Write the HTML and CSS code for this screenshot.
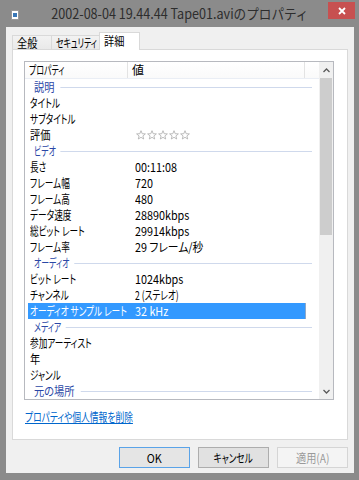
FILE: index.html
```html
<!DOCTYPE html>
<html lang="ja">
<head>
    <meta charset="UTF-8">
    <title>2002-08-04 19.44.44 Tape01.aviのプロパティ</title>
    <link rel="stylesheet" href="styles.css">
</head>
<body>
    <div class="window">
        <div class="titlebar">
            <svg class="app-icon" width="8" height="10" viewBox="0 0 8 10">
                <rect x="0.5" y="0.5" width="7" height="9" fill="#fff" stroke="#9a9a9a"/>
                <rect x="2" y="3" width="4" height="4" fill="#3a78b8"/>
            </svg>
            <div class="title">2002-08-04 19.44.44 Tape01.aviのプロパティ</div>
            <div class="close">
                <svg width="8" height="8" viewBox="0 0 8 8">
                    <path d="M1 1 L7 7 M7 1 L1 7" stroke="#fff" stroke-width="1.8"/>
                </svg>
            </div>
        </div>

        <div class="client">
            <div class="tabs">
                <div class="tab tab-general"><span class="t wide">全般</span></div>
                <div class="tab tab-security"><span class="t narrow">セキュリティ</span></div>
                <div class="tab tab-details active"><span class="t wide">詳細</span></div>
            </div>

            <div class="panel">
                <div class="listview">
                    <div class="list">
                        <div class="header">
                            <div class="col-name"><span class="t narrow">プロパティ</span></div>
                            <div class="col-value">値</div>
                            <div class="col-rest"></div>
                        </div>
                        <div class="rows">
                            <div class="group"><span class="t wide">説明</span></div>
                            <div class="row"><span class="t">タイトル</span><span></span></div>
                            <div class="row"><span class="t">サブタイトル</span><span></span></div>
                            <div class="row">
                                <span class="t wide">評価</span>
                                <span class="stars">
                                    <svg width="55" height="10" viewBox="0 0 55 10">
                                        <g fill="#fff" stroke="#b4b4b4" stroke-width="0.9" stroke-linejoin="round">
                                            <polygon points="5,0.7 6.2,3.7 9.4,3.9 6.9,5.9 7.7,9 5,7.3 2.3,9 3.1,5.9 0.6,3.9 3.8,3.7"/>
                                            <polygon transform="translate(11 0)" points="5,0.7 6.2,3.7 9.4,3.9 6.9,5.9 7.7,9 5,7.3 2.3,9 3.1,5.9 0.6,3.9 3.8,3.7"/>
                                            <polygon transform="translate(22 0)" points="5,0.7 6.2,3.7 9.4,3.9 6.9,5.9 7.7,9 5,7.3 2.3,9 3.1,5.9 0.6,3.9 3.8,3.7"/>
                                            <polygon transform="translate(33 0)" points="5,0.7 6.2,3.7 9.4,3.9 6.9,5.9 7.7,9 5,7.3 2.3,9 3.1,5.9 0.6,3.9 3.8,3.7"/>
                                            <polygon transform="translate(44 0)" points="5,0.7 6.2,3.7 9.4,3.9 6.9,5.9 7.7,9 5,7.3 2.3,9 3.1,5.9 0.6,3.9 3.8,3.7"/>
                                        </g>
                                    </svg>
                                </span>
                            </div>
                            <div class="group"><span class="t narrow">ビデオ</span></div>
                            <div class="row"><span class="t">長さ</span><span class="t num">00:11:08</span></div>
                            <div class="row"><span class="t">フレーム幅</span><span class="t num">720</span></div>
                            <div class="row"><span class="t">フレーム高</span><span class="t num">480</span></div>
                            <div class="row"><span class="t">データ速度</span><span class="t num">28890kbps</span></div>
                            <div class="row"><span class="t">総ビット レート</span><span class="t num">29914kbps</span></div>
                            <div class="row"><span class="t">フレーム率</span><span class="t num">29 フレーム/秒</span></div>
                            <div class="group"><span class="t narrow">オーディオ</span></div>
                            <div class="row"><span class="t">ビット レート</span><span class="t num">1024kbps</span></div>
                            <div class="row"><span class="t">チャンネル</span><span class="t">2 (ステレオ)</span></div>
                            <div class="row selected"><span class="t">オーディオ サンプル レート</span><span class="t num">32 kHz</span></div>
                            <div class="group"><span class="t narrow">メディア</span></div>
                            <div class="row"><span class="t">参加アーティスト</span><span></span></div>
                            <div class="row"><span class="t wide">年</span><span></span></div>
                            <div class="row"><span class="t">ジャンル</span><span></span></div>
                            <div class="group"><span class="t wide">元の場所</span></div>
                        </div>
                    </div>
                    <div class="scrollbar">
                        <div class="arrow">
                            <svg width="7" height="5" viewBox="0 0 7 5"><path d="M0.5 4 L3.5 1 L6.5 4" fill="none" stroke="#5a5a5a" stroke-width="1.3"/></svg>
                        </div>
                        <div class="track"><div class="thumb"></div></div>
                        <div class="arrow">
                            <svg width="7" height="5" viewBox="0 0 7 5"><path d="M0.5 1 L3.5 4 L6.5 1" fill="none" stroke="#5a5a5a" stroke-width="1.3"/></svg>
                        </div>
                    </div>
                </div>
                <div class="link-row"><a class="link t" href="#">プロパティや個人情報を削除</a></div>
            </div>

            <div class="buttons">
                <button class="btn default"><span class="t num">OK</span></button>
                <button class="btn"><span class="t">キャンセル</span></button>
                <button class="btn disabled"><span class="t wide">適用(A)</span></button>
            </div>
        </div>
    </div>
</body>
</html>
```

FILE: styles.css
```css
* {
    box-sizing: border-box;
}

body {
    margin: 0;
    font-family: "Noto Sans CJK JP", sans-serif;
    font-size: 12px;
    font-feature-settings: "palt" 1;
    color: #000;
}

/* Meiryo UI is much narrower than Noto, so squeeze the text a little */
.t {
    display: inline-block;
    white-space: nowrap;
    transform: scaleX(0.72);
    transform-origin: left center;
}

.t.narrow {
    transform: scaleX(0.66);
}

.t.wide {
    transform: scaleX(0.85);
}

.t.num {
    transform: scaleX(0.9);
}

.window {
    width: 359px;
    height: 480px;
    background: #8b8b8b;
    display: flex;
    flex-direction: column;
}

/* title bar */
.titlebar {
    height: 27px;
    display: grid;
    grid-template-columns: 1fr auto 1fr;
    align-items: start;
}

.app-icon {
    margin: 10px 0 0 11px;
}

.title {
    font-size: 14px;
    line-height: 27px;
    color: #2d2d2d;
    font-feature-settings: normal;
    transform: scaleX(0.9);
}

.close {
    justify-self: end;
    width: 27px;
    height: 17px;
    margin: 2px 4px 0 0;
    background: #c75050;
    display: flex;
    align-items: center;
    justify-content: center;
}

/* client area */
.client {
    flex: 1;
    margin: 0 5px 7px 6px;
    background: #f0f0f0;
    padding: 5px 6px 5px 6px;
    display: flex;
    flex-direction: column;
}

.tabs {
    height: 17px;
    display: flex;
    align-items: flex-end;
    position: relative;
    z-index: 1;
}

.tab {
    height: 14px;
    border: 1px solid #d9d9d9;
    border-bottom: none;
    background: linear-gradient(#f2f2f2, #e9e9e9);
    line-height: 13px;
    padding-left: 4px;
}

.tab .t {
    margin-right: -20px;
}

.tab-general {
    width: 40px;
}

.tab-security {
    width: 49px;
    margin-left: -1px;
}

.tab-details {
    width: 41px;
    margin-left: -1px;
}

.tab.active {
    height: 18px;
    background: #fff;
    margin-bottom: -1px;
    line-height: 16px;
}

.panel {
    flex: 1;
    background: #fff;
    border: 1px solid #d9d9d9;
    padding: 11px 13px 0 11px;
}

/* list view */
.listview {
    height: 339px;
    border: 1px solid #b7b9bf;
    display: flex;
    overflow: hidden;
}

.list {
    flex: 1;
    overflow: hidden;
}

.header {
    height: 17px;
    display: flex;
    border-bottom: 1px solid #eaeef5;
    background: linear-gradient(#fff, #fafafa);
    line-height: 16px;
}

.header > div {
    border-right: 1px solid #e3e3e3;
}

.col-name {
    width: 103px;
    padding-left: 4px;
}

.col-value {
    width: 177px;
    padding-left: 4px;
}

.col-rest {
    flex: 1;
    border-right: none !important;
}

.rows {
    margin: 0 7px 0 3px;
}

.group {
    height: 16px;
    line-height: 16px;
    padding-left: 6px;
    color: #2a47a6;
    background: linear-gradient(#cfd9ec, #cfd9ec) right 8px / calc(100% - 6px) 1px no-repeat;
}

.group .t {
    background: #fff;
    padding-right: 7px;
}

.row {
    height: 16px;
    line-height: 16px;
    display: grid;
    grid-template-columns: 105px 1fr;
    align-items: center;
    padding-left: 2px;
    margin-right: 6px;
}

.row > span {
    justify-self: start;
}

.row.selected {
    background: #3399ff;
    color: #fff;
    box-shadow: inset -1px 0 0 #8fa9c8;
}

.stars {
    display: flex;
    align-items: center;
    padding-left: 1px;
}

.scrollbar {
    width: 14px;
    background: #f0f0f0;
    display: flex;
    flex-direction: column;
}

.arrow {
    height: 16px;
    display: flex;
    align-items: center;
    justify-content: center;
}

.track {
    flex: 1;
    padding: 0 1px;
}

.thumb {
    height: 157px;
    background: #cdcdcd;
}

.link-row {
    margin-top: 9px;
    padding-left: 1px;
    line-height: 16px;
}

.link {
    color: #0066cc;
    text-decoration: underline;
    transform: scaleX(0.73);
}

/* buttons */
.buttons {
    display: flex;
    justify-content: flex-end;
    gap: 8px;
    margin-top: 7px;
}

.btn {
    width: 71px;
    height: 21px;
    padding: 0;
    font-family: inherit;
    font-size: 12px;
    font-feature-settings: "palt" 1;
    border: 1px solid #adadad;
    background: #e1e1e1;
    color: #000;
    display: flex;
    align-items: center;
    justify-content: center;
}

.btn .t {
    transform-origin: center;
}

.btn.default {
    border-color: #5aa3e8;
    background: #e5e5e5;
}

.btn.disabled {
    border-color: #d5d5d5;
    background: #f4f4f4;
    color: #9a9a9a;
}
```
